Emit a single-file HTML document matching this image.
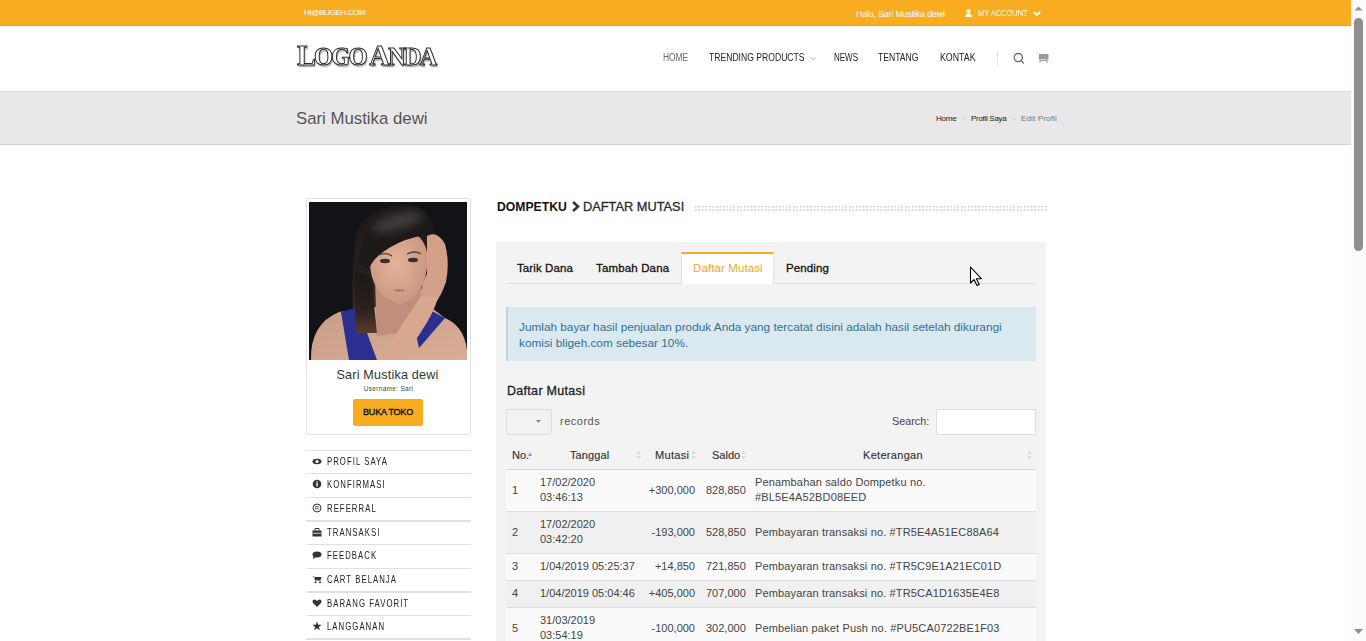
<!DOCTYPE html>
<html><head><meta charset="utf-8">
<style>
*{margin:0;padding:0;box-sizing:border-box}
html,body{width:1366px;height:641px;overflow:hidden;background:#fff;font-family:"Liberation Sans",sans-serif;color:#333}
.a{position:absolute;white-space:nowrap;line-height:1}
.sx{transform-origin:0 0}
#topbar{position:absolute;left:0;top:0;width:1351px;height:26px;background:#f8ad21;border-bottom:1px dotted #d9951a}
#header{position:absolute;left:0;top:26px;width:1351px;height:64px;background:#fff}
#ptitle{position:absolute;left:0;top:91px;width:1351px;height:54px;background:#e8e8e8;border-top:1px solid #d9d9d9;border-bottom:1px solid #d0d0d0}
#sb{position:absolute;left:1351px;top:0;width:15px;height:641px;background:#fbfbfb}
#thumb{position:absolute;left:1354px;top:18px;width:9px;height:233px;background:#8f8f8f;border-radius:5px}
.tw{color:#fff;font-size:8px}
.nav{font-size:10px;color:#222;top:53px}
.bc{font-size:8px;top:115px;color:#222}
#profile{position:absolute;left:306px;top:198px;width:165px;height:237px;border:1px solid #e3e3e3;border-radius:2px;background:#fff}
.mi{position:absolute;left:306px;width:165px;height:24px;border-top:1px solid #e1e1e1}
.mi span{position:absolute;left:21px;top:5px;font-size:10.5px;line-height:1;color:#222;white-space:nowrap;letter-spacing:1.4px;transform:scaleX(0.74);transform-origin:0 0}
.mi svg{position:absolute;left:6px;top:5px}
#panel{position:absolute;left:496px;top:242px;width:550px;height:420px;background:#f3f3f3}
.tab{position:absolute;top:252px;height:32px;font-size:11.5px;color:#111;-webkit-text-stroke:0.3px #111}
.tab span{position:absolute;top:11px;white-space:nowrap;line-height:1}
#alert{position:absolute;left:506px;top:307px;width:530px;height:54px;background:#dae9ef;border-left:2px solid #bcd5e0}
#alert p{position:absolute;left:11px;top:12px;font-size:11.8px;line-height:16px;color:#31708f;white-space:nowrap}
.th{position:absolute;top:450px;font-size:11px;color:#333;-webkit-text-stroke:0.15px #333;white-space:nowrap;line-height:1}
.row{position:absolute;left:506px;width:530px;border-top:1px solid #dedede}
.td{position:absolute;font-size:11px;color:#444;white-space:nowrap;line-height:15px}
.r{text-align:right}
</style></head><body>
<div id="topbar"></div>
<div class="a tw" id="t_hi" style="left:304px;top:9px;letter-spacing:-0.4px">HI@BLIGEH.COM</div>
<div class="a" style="left:376px;top:0;width:1px;height:25px;background:#f7b02e"></div>
<div class="a tw" id="t_halo" style="left:856px;top:10px;font-size:8.5px">Halo, Sari Mustika dewi</div>
<svg class="a" style="left:965px;top:9px" width="7" height="8" viewBox="0 0 7 8"><circle cx="3.5" cy="2.2" r="2" fill="#fff"/><path d="M0.3 8 Q0.3 4.5 3.5 4.5 Q6.7 4.5 6.7 8Z" fill="#fff"/></svg>
<div class="a tw sx" id="t_acc" style="left:978px;top:9px;font-size:9px;transform:scaleX(0.83)">MY ACCOUNT</div>
<svg class="a" style="left:1033px;top:11px" width="8" height="5" viewBox="0 0 8 5"><path d="M0.8 0.8 L4 4 L7.2 0.8" stroke="#fff" stroke-width="1.8" fill="none"/></svg>

<div id="header"></div>
<div class="a" id="t_logo" style="left:297px;top:40px;transform:scaleX(0.945);transform-origin:0 0;font-family:'Liberation Serif',serif;font-weight:bold;font-size:30px;color:#fff;-webkit-text-stroke:1px #2a2a2a;text-shadow:1px 1.5px 1.5px #999;letter-spacing:-2px">L<span style="font-size:26px">OGO</span> A<span style="font-size:26px">NDA</span></div>
<div class="a nav sx" id="t_home" style="left:663px;color:#666;transform:scaleX(0.84)">HOME</div>
<div class="a nav sx" id="t_trend" style="left:709px;transform:scaleX(0.86)">TRENDING PRODUCTS</div>
<svg class="a" style="left:810px;top:57px" width="6" height="4" viewBox="0 0 6 4"><path d="M0.5 0.5 L3 3 L5.5 0.5" stroke="#aaa" stroke-width="0.8" fill="none"/></svg>
<div class="a nav sx" id="t_news" style="left:834px;transform:scaleX(0.80)">NEWS</div>
<div class="a nav sx" id="t_tent" style="left:878px;transform:scaleX(0.86)">TENTANG</div>
<div class="a nav sx" id="t_kont" style="left:940px;transform:scaleX(0.88)">KONTAK</div>
<div class="a" style="left:997px;top:52px;width:1px;height:14px;background:#e3e3e3"></div>
<svg class="a" style="left:1012px;top:52px" width="13" height="13" viewBox="0 0 13 13"><circle cx="6.3" cy="5.6" r="4.1" stroke="#666" stroke-width="1.3" fill="none"/><path d="M9.2 8.6 L11.8 11.6" stroke="#666" stroke-width="1.2"/></svg>
<svg class="a" style="left:1036px;top:52px" width="14" height="12" viewBox="0 0 14 12"><rect x="2.8" y="2" width="9.7" height="5.3" fill="#999"/><path d="M1 1 H2.5" stroke="#bbb" stroke-width="0.8"/><path d="M4 7 V11 M11 7 V11 M4 8.5 H11" stroke="#999" stroke-width="1"/></svg>

<div id="ptitle"></div>
<div class="a" id="t_title" style="left:296px;top:111px;font-size:16.8px;color:#555">Sari Mustika dewi</div>
<div class="a bc" id="t_bc1" style="left:936px;letter-spacing:-0.2px">Home</div>
<div class="a" style="left:964px;top:118px;width:1px;height:2px;background:#ccc"></div>
<div class="a bc" id="t_bc2" style="left:971px;letter-spacing:-0.3px">Profil Saya</div>
<div class="a" style="left:1014px;top:118px;width:1px;height:2px;background:#ccc"></div>
<div class="a bc" id="t_bc3" style="left:1021px;color:#777;letter-spacing:0.15px">Edit Profil</div>

<div id="profile"></div>
<svg class="a" style="left:309px;top:202px" width="158" height="158" viewBox="0 0 158 158">
<defs><filter id="bl3" x="-50%" y="-50%" width="200%" height="200%" color-interpolation-filters="sRGB"><feGaussianBlur stdDeviation="4"/></filter><filter id="bl1" color-interpolation-filters="sRGB"><feGaussianBlur stdDeviation="0.7"/></filter>
<linearGradient id="hg" x1="0" y1="0" x2="0" y2="1"><stop offset="0" stop-color="#1c1818"/><stop offset="0.6" stop-color="#2a201c"/><stop offset="1" stop-color="#5a3c2c"/></linearGradient>
<radialGradient id="fg" cx="0.45" cy="0.45" r="0.6"><stop offset="0" stop-color="#e2b49c"/><stop offset="1" stop-color="#c9957e"/></radialGradient>
<linearGradient id="sg" x1="0" y1="0" x2="1" y2="1"><stop offset="0" stop-color="#c79c86"/><stop offset="1" stop-color="#d9ad96"/></linearGradient>
</defs>
<rect width="158" height="158" fill="#111317"/><g filter="url(#bl1)">
<path d="M46,40 Q50,8 88,3 Q120,1 126,30 L122,100 L70,104 L67,131 L46,131 Q41,80 46,40Z" fill="url(#hg)"/>
<path d="M2,158 Q1,122 30,110 L60,106 L112,98 L136,116 Q155,124 158,148 L158,158Z" fill="url(#sg)"/>
<path d="M66,80 L112,80 L112,128 L68,134Z" fill="#bf8f7b"/>
<path d="M32,110 L49,105 L58,131 L68,158 L40,158 Z" fill="#2c2f8f"/>
<path d="M46,70 L62,75 L68,131 L48,131 Q44,100 46,70Z" fill="url(#hg)"/>
<path d="M119,107 L136,116 L110,146 L106,128Z" fill="#2c2f8f"/>
<path d="M61,56 Q60,94 91,102 Q117,96 119,56 Q116,28 90,28 Q64,28 61,56Z" fill="url(#fg)"/>
<path d="M50,62 Q52,14 90,6 Q121,3 126,32 L117,33 Q96,36 80,46 Q66,54 60,66Z" fill="#1d1919"/>
<ellipse cx="88" cy="20" rx="26" ry="8" transform="rotate(-15 88 20)" fill="#6a6464" opacity="0.45" filter="url(#bl3)"/>
<ellipse cx="76" cy="59" rx="5" ry="2.2" fill="#3b2b29"/>
<ellipse cx="104" cy="58" rx="5" ry="2.2" fill="#3b2b29"/>
<path d="M70,53 Q77,50 83,54" stroke="#5a3f36" stroke-width="1.3" fill="none"/>
<path d="M98,52 Q106,48 112,52" stroke="#5a3f36" stroke-width="1.3" fill="none"/>
<path d="M84,88 Q90,86 97,88 Q90,92 84,88Z" fill="#b27c6e"/>
<path d="M118,34 Q128,28 136,42 Q141,60 137,80 Q132,94 127,100 L112,100 Q110,86 118,72Z" fill="#d4a08a"/>
<path d="M112,94 L129,96 Q124,112 112,130 Q100,148 95,158 L76,158 Q86,130 103,108Z" fill="#d8a78f"/>
</g></svg>
<div class="a" id="t_pname" style="left:305px;top:369px;width:165px;text-align:center;font-size:12.6px;color:#333;letter-spacing:0.2px">Sari Mustika dewi</div>
<div class="a" id="t_user" style="left:306px;top:386px;width:165px;text-align:center;font-size:6.5px;color:#444;letter-spacing:0.3px">Username: Sari</div>
<div class="a" style="left:353px;top:399px;width:70px;height:27px;background:#f8ad21;border-radius:2px"></div>
<div class="a" id="t_buka" style="left:353px;top:408px;width:70px;text-align:center;font-size:9px;color:#111;letter-spacing:-0.2px;-webkit-text-stroke:0.35px #111">BUKA TOKO</div>

<div class="mi" style="top:450px"><svg width="10" height="10" viewBox="0 0 10 10"><ellipse cx="5" cy="5.5" rx="4.5" ry="2.8" fill="#333"/><circle cx="5" cy="5.5" r="1.6" fill="#fff"/></svg><span>PROFIL SAYA</span></div>
<div class="mi" style="top:473px"><svg width="10" height="10" viewBox="0 0 10 10"><circle cx="5" cy="5" r="4.3" fill="#333"/><rect x="4.3" y="4" width="1.4" height="3.5" fill="#fff"/><rect x="4.3" y="2.2" width="1.4" height="1.2" fill="#fff"/></svg><span>KONFIRMASI</span></div>
<div class="mi" style="top:497px"><svg width="10" height="10" viewBox="0 0 10 10"><circle cx="5" cy="5" r="4" stroke="#333" stroke-width="1" fill="none"/><text x="5" y="7.3" font-size="6" text-anchor="middle" fill="#333" font-family="Liberation Sans">R</text></svg><span>REFERRAL</span></div>
<div class="mi" style="top:520px;border-top:2px solid #e1e1e1"><svg width="10" height="10" viewBox="0 0 10 10"><rect x="0.5" y="3.5" width="9" height="6" fill="#333"/><path d="M3 3.5 V1.5 H7 V3.5" stroke="#333" fill="none"/><rect x="1" y="5.8" width="8" height="0.8" fill="#fff"/></svg><span>TRANSAKSI</span></div>
<div class="mi" style="top:544px"><svg width="10" height="10" viewBox="0 0 10 10"><ellipse cx="5" cy="4.5" rx="4.5" ry="3" fill="#333"/><path d="M1.5 6 L1 9 L4 7Z" fill="#333"/></svg><span>FEEDBACK</span></div>
<div class="mi" style="top:568px"><svg width="10" height="10" viewBox="0 0 10 10"><path d="M0.5 2 H2 L3 6.5 H8.5 L9.5 3 H2.5Z" fill="#333"/><circle cx="3.5" cy="8.2" r="1" fill="#333"/><circle cx="8" cy="8.2" r="1" fill="#333"/></svg><span>CART BELANJA</span></div>
<div class="mi" style="top:591px;border-top:2px solid #e1e1e1"><svg width="10" height="10" viewBox="0 0 10 10"><path d="M5 9 L1 5 Q-0.5 2 2.5 1.5 Q4 1.5 5 3 Q6 1.5 7.5 1.5 Q10.5 2 9 5Z" fill="#333"/></svg><span>BARANG FAVORIT</span></div>
<div class="mi" style="top:615px"><svg width="10" height="10" viewBox="0 0 10 10"><path d="M5 0.5 L6.2 3.8 L9.6 3.8 L6.9 5.9 L7.9 9.3 L5 7.2 L2.1 9.3 L3.1 5.9 L0.4 3.8 L3.8 3.8Z" fill="#333"/></svg><span>LANGGANAN</span></div>
<div class="mi" style="top:638px;border-top:2px solid #e1e1e1"></div>

<div class="a" id="t_dom" style="left:497px;top:201px;font-size:12.2px;font-weight:bold;color:#111">DOMPETKU</div>
<svg class="a" style="left:571px;top:201px" width="10" height="11" viewBox="0 0 10 11"><path d="M2 1 L7 5.5 L2 10" stroke="#333" stroke-width="2.6" fill="none"/></svg>
<div class="a" id="t_daf" style="left:583px;top:201px;font-size:12.8px;color:#2a2a2a;-webkit-text-stroke:0.3px #2a2a2a">DAFTAR MUTASI</div>
<div class="a" style="left:694px;top:205px;width:353px;height:7px;background-image:radial-gradient(circle at 1.5px 1.5px,#c8c8c8 0.75px,transparent 1.1px);background-size:3.5px 3.5px"></div>

<div id="panel"></div>
<div class="a" style="left:506px;top:283px;width:530px;height:1px;background:#e2e2e2"></div>
<div class="tab" id="t_tab1" style="left:507px;width:74px"><span style="left:10px;letter-spacing:0.1px">Tarik Dana</span></div>
<div class="tab" id="t_tab2" style="left:586px;width:95px"><span style="left:10px;letter-spacing:0.15px">Tambah Dana</span></div>
<div class="tab" style="left:681px;width:93px;background:#fff;border-top:2px solid #f0a928;border-left:1px solid #e3e3e3;border-right:1px solid #e3e3e3;height:32px"><span id="t_tab3" style="left:11px;top:9px;color:#f0a928;letter-spacing:0.1px;-webkit-text-stroke:0">Daftar Mutasi</span></div>
<div class="tab" id="t_tab4" style="left:776px;width:60px"><span style="left:10px;letter-spacing:0.1px">Pending</span></div>

<div id="alert"><p id="t_alert">Jumlah bayar hasil penjualan produk Anda yang tercatat disini adalah hasil setelah dikurangi<br>komisi bligeh.com sebesar 10%.</p></div>

<div class="a" id="t_dm" style="left:507px;top:385px;font-size:12.5px;color:#222;letter-spacing:0.3px;-webkit-text-stroke:0.3px #222">Daftar Mutasi</div>
<div class="a" style="left:506px;top:409px;width:46px;height:26px;border:1px solid #ddd;border-radius:2px;background:#f2f2f2"></div>
<svg class="a" style="left:536px;top:420px" width="5" height="3" viewBox="0 0 5 3"><path d="M0 0 H5 L2.5 3Z" fill="#888"/></svg>
<div class="a" id="t_rec" style="left:560px;top:416px;font-size:11px;color:#555;letter-spacing:0.5px">records</div>
<div class="a" id="t_search" style="left:892px;top:416px;font-size:10.8px;color:#444">Search:</div>
<div class="a" style="left:936px;top:409px;width:100px;height:26px;border:1px solid #ddd;background:#fff"></div>

<div class="th" id="t_no" style="left:512px">No.</div>
<svg class="a" style="left:528px;top:452px" width="4" height="4" viewBox="0 0 4 4"><path d="M0 4 L2 0 L4 4Z" fill="#9a8fd8"/></svg>
<div class="th" id="t_tg" style="left:570px;letter-spacing:0.1px">Tanggal</div>
<div class="th" id="t_mu" style="left:655px;letter-spacing:0.3px">Mutasi</div>
<div class="th" id="t_sa" style="left:712px">Saldo</div>
<div class="th" id="t_ke" style="left:863px;letter-spacing:0.3px">Keterangan</div>
<svg class="a" style="left:636px;top:450px" width="5" height="10" viewBox="0 0 5 10"><path d="M0 4 L2.5 0.5 L5 4Z M0 6 L2.5 9.5 L5 6Z" fill="#ddd"/></svg>
<svg class="a" style="left:691px;top:450px" width="5" height="10" viewBox="0 0 5 10"><path d="M0 4 L2.5 0.5 L5 4Z M0 6 L2.5 9.5 L5 6Z" fill="#ddd"/></svg>
<svg class="a" style="left:741px;top:450px" width="5" height="10" viewBox="0 0 5 10"><path d="M0 4 L2.5 0.5 L5 4Z M0 6 L2.5 9.5 L5 6Z" fill="#ddd"/></svg>
<svg class="a" style="left:1027px;top:450px" width="5" height="10" viewBox="0 0 5 10"><path d="M0 4 L2.5 0.5 L5 4Z M0 6 L2.5 9.5 L5 6Z" fill="#ddd"/></svg>
<div class="a" style="left:506px;top:469px;width:530px;height:1px;background:#d5d5d5"></div>

<div class="row" style="top:470px;height:41px;background:#fafafa;border-top:none"></div>
<div class="row" style="top:511px;height:42px;background:#f0f0f0"></div>
<div class="row" style="top:553px;height:27px;background:#fafafa"></div>
<div class="row" style="top:580px;height:27px;background:#f0f0f0"></div>
<div class="row" style="top:607px;height:40px;background:#fafafa"></div>

<div class="td" style="left:512px;top:483px">1</div>
<div class="td" style="left:540px;top:475px">17/02/2020<br>03:46:13</div>
<div class="td r" style="left:640px;width:55px;top:483px">+300,000</div>
<div class="td" style="left:706px;top:483px">828,850</div>
<div class="td" style="left:755px;letter-spacing:0.15px;top:475px">Penambahan saldo Dompetku no.<br>#BL5E4A52BD08EED</div>

<div class="td" style="left:512px;top:525px">2</div>
<div class="td" style="left:540px;top:517px">17/02/2020<br>03:42:20</div>
<div class="td r" style="left:640px;width:55px;top:525px">-193,000</div>
<div class="td" style="left:706px;top:525px">528,850</div>
<div class="td" style="left:755px;letter-spacing:0.15px;top:525px">Pembayaran transaksi no. #TR5E4A51EC88A64</div>

<div class="td" style="left:512px;top:559px">3</div>
<div class="td" style="left:540px;top:559px">1/04/2019 05:25:37</div>
<div class="td r" style="left:640px;width:55px;top:559px">+14,850</div>
<div class="td" style="left:706px;top:559px">721,850</div>
<div class="td" style="left:755px;letter-spacing:0.15px;top:559px">Pembayaran transaksi no. #TR5C9E1A21EC01D</div>

<div class="td" style="left:512px;top:586px">4</div>
<div class="td" style="left:540px;top:586px">1/04/2019 05:04:46</div>
<div class="td r" style="left:640px;width:55px;top:586px">+405,000</div>
<div class="td" style="left:706px;top:586px">707,000</div>
<div class="td" style="left:755px;letter-spacing:0.15px;top:586px">Pembayaran transaksi no. #TR5CA1D1635E4E8</div>

<div class="td" style="left:512px;top:621px">5</div>
<div class="td" style="left:540px;top:613px">31/03/2019<br>03:54:19</div>
<div class="td r" style="left:640px;width:55px;top:621px">-100,000</div>
<div class="td" style="left:706px;top:621px">302,000</div>
<div class="td" style="left:755px;letter-spacing:0.15px;top:621px">Pembelian paket Push no. #PU5CA0722BE1F03</div>

<svg class="a" style="left:969px;top:266px" width="14" height="21" viewBox="0 0 14 21"><path d="M1.5 1 L1.5 17 L5 13.6 L8 19.5 L10.3 18.4 L7.4 12.7 L12.3 12.7 Z" fill="#fff" stroke="#000" stroke-width="1.1" stroke-linejoin="round"/></svg>

<div id="sb"></div>
<svg class="a" style="left:1354px;top:6px" width="9" height="5" viewBox="0 0 9 5"><path d="M0.5 4.5 L4.5 0.5 L8.5 4.5Z" fill="#8f8f8f"/></svg>
<div id="thumb"></div>
<svg class="a" style="left:1354px;top:629px" width="9" height="5" viewBox="0 0 9 5"><path d="M0 0 L4.5 5 L9 0Z" fill="#8f8f8f"/></svg>
</body></html>
